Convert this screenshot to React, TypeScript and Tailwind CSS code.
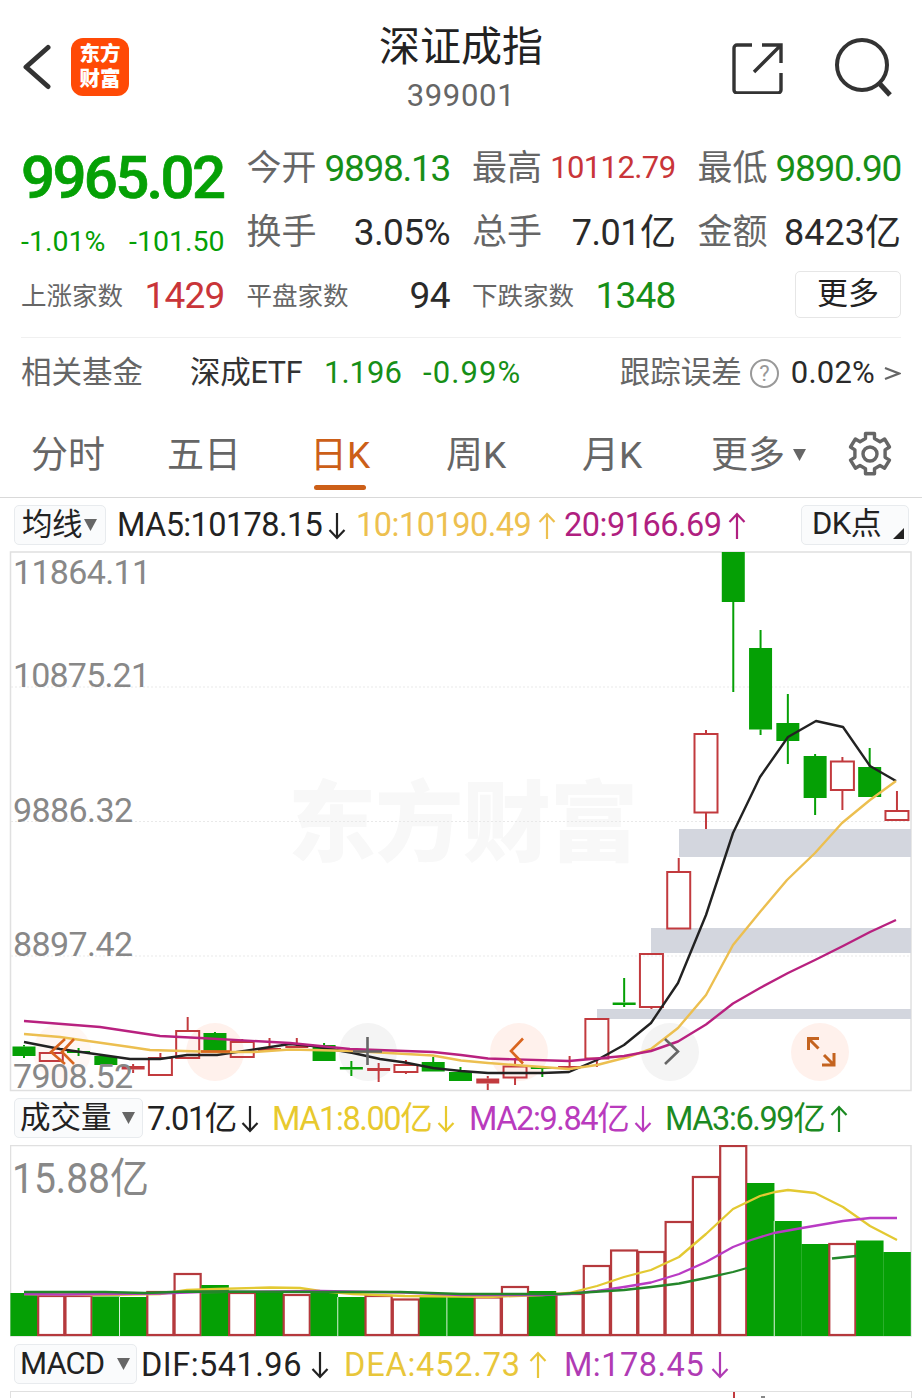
import React from 'react';

const STEP = 27.28;
const UP = '#c23a3e';
const DOWN = '#05a005';

type Candle = { up: boolean; open: number; close: number; high: number; low: number };

const c = (up: boolean, open: number, close: number, high: number, low: number): Candle => ({ up, open, close, high, low });

const candles: Candle[] = [
  c(false, 1046.5, 1056, 1045, 1058),
  c(true, 1053, 1061, 1051, 1061),
  c(false, 1051, 1053, 1048, 1056),
  c(false, 1056, 1065, 1056, 1065),
  c(true, 1066, 1069.5, 1064, 1073),
  c(true, 1058, 1075, 1053, 1075),
  c(true, 1031, 1058, 1017, 1058),
  c(false, 1033, 1052, 1032, 1052),
  c(true, 1042, 1057, 1039, 1057),
  c(true, 1048, 1051, 1038, 1051),
  c(true, 1046, 1048, 1038, 1048),
  c(false, 1045, 1061, 1043, 1061),
  c(false, 1067, 1069.5, 1061, 1076),
  c(true, 1068, 1071, 1063, 1082),
  c(true, 1065, 1072, 1060, 1074),
  c(false, 1062, 1071.5, 1057, 1071.5),
  c(false, 1072, 1081, 1067, 1081),
  c(true, 1078.5, 1083.5, 1076, 1090),
  c(true, 1066.5, 1077.5, 1058, 1085),
  c(false, 1067, 1069, 1067, 1077),
  c(true, 1066, 1068, 1056, 1068),
  c(true, 1019, 1058.5, 1019, 1067),
  c(false, 1002.5, 1005, 978, 1007),
  c(true, 954, 1007, 954, 1009),
  c(true, 872, 928.5, 858, 928.5),
  c(true, 734, 812.5, 730, 829),
  c(false, 552, 602, 552, 692),
  c(false, 648, 729.5, 630, 735),
  c(false, 723, 741, 694, 764),
  c(false, 756, 798, 754, 815),
  c(true, 761.5, 790, 757, 810),
  c(false, 767, 797, 748, 797),
  c(true, 811, 820, 791, 820),
];

// top edge of each volume bar; the colour comes from volumeUp
const volumes = [
  1293, 1296, 1296, 1296.5, 1297, 1292, 1274, 1285, 1293, 1291, 1295, 1291, 1297, 1296, 1299.5, 1297, 1297,
  1297.5, 1287, 1291, 1294, 1266, 1250.5, 1252, 1222, 1177, 1146, 1183, 1221, 1244, 1244, 1240.5, 1252,
];
const volumeUp = new Set([1, 2, 5, 6, 8, 10, 13, 14, 17, 18, 20, 21, 22, 23, 24, 25, 26, 30]);
const volumeGaps = [4, 12, 16, 28];

const ma5 = '24,1042 60,1049 130,1059 160,1059 187,1055 217,1055 290,1044 313,1046 353,1053 380,1059 405,1062.5 433,1068 461,1071 488,1073 542,1073 569,1072 597,1060 624,1045 651,1023 678,983 706,915 733,833 760,777 788,737 816,721 843,727 870,766 896,781';
const ma10 = '24,1034 60,1037 95,1042 130,1047 150,1050 217,1052 253,1052 290,1049.5 353,1051 433,1055.5 461,1060.5 488,1063 542,1067 569,1069 597,1065 628,1057 651,1049 678,1028 706,995 733,945 760,912 787,880 815,853 842,823 870,800 896,781';
const ma20 = '24,1021 100,1027 160,1036 200,1038 290,1043 350,1049 433,1052 461,1055 488,1058.5 569,1061 597,1058.5 624,1056 651,1051 678,1041.5 706,1024.5 733,1003.5 760,988 788,973 815,960 843,946 870,932 896,920';

const vma1 = '24,1294 100,1295 160,1294 187,1290 217,1289 270,1287.5 300,1288 320,1291 353,1294 405,1296 461,1296.5 488,1297 542,1295 569,1293 597,1286 624,1277 651,1270 679,1257 706,1234 733,1209 760,1196 775,1192 788,1190 815,1193 843,1207 870,1226 897,1240';
const vma2 = '24,1294 60,1294.5 160,1293.5 200,1292 320,1291 405,1292.5 461,1295 542,1295 569,1294 597,1291 624,1287 651,1282.5 679,1274 706,1262 733,1247 751,1240 774,1233 802,1228 843,1221 870,1218 897,1218';
const vma3 = '24,1292 105,1292 145,1293 187,1291.5 330,1292 400,1292 461,1294 560,1294 624,1290 651,1287 679,1283.5 706,1278 733,1272 747,1268';

const Arrow = ({ up = false }: { up?: boolean }) => (
  <svg width="18" height="28" viewBox="0 0 18 28" fill="none" stroke="currentColor" strokeWidth="2.2" className={up ? '' : 'rotate-180'}>
    <path d="M9 27V2M1.5 10 9 2l7.5 8" />
  </svg>
);

const Caret = ({ className = '' }: { className?: string }) => (
  <svg width="13" height="12" viewBox="0 0 13 12" className={className}>
    <path d="M0 0h13L6.5 12z" fill="#666" />
  </svg>
);

const Indicator = ({ text, up, className }: { text: string; up?: boolean; className: string }) => (
  <div className={`flex items-center justify-between shrink-0 pt-[2px] ${className}`}>
    <span>{text}</span>
    <Arrow up={up} />
  </div>
);

const Header = () => (
  <header className="flex h-[130px] px-[22px] justify-between shrink-0">
    <div className="flex items-center w-[180px] gap-[20px] pt-[4px]">
      <svg width="29" height="46" viewBox="0 0 29 46" fill="none" stroke="#333" strokeWidth="5" strokeLinecap="round">
        <path d="M26 3.5 4 23l22 19.5" strokeLinejoin="round" />
      </svg>
      <div className="w-[58px] h-[58px] rounded-[12px] bg-[#ff4a06] text-white font-black text-[20.5px] leading-[25px] flex flex-col items-center justify-center">
        <span>东方</span>
        <span>财富</span>
      </div>
    </div>
    <div className="flex flex-col items-center">
      <h1 className="text-[41px] leading-[50px] mt-[22px] text-[#222]">深证成指</h1>
      <div className="text-[31px] leading-[36px] mt-[6px] text-[#666] tracking-[0.7px]">399001</div>
    </div>
    <div className="w-[180px] flex justify-end items-center gap-[48px] pt-[3px] pr-[9px]">
      <svg width="54" height="54" viewBox="0 0 54 54" fill="none" stroke="#333" strokeWidth="3.4">
        <path d="M23 5H8a3 3 0 0 0-3 3v42a3 3 0 0 0 3 3h41a3 3 0 0 0 3-3V33M33 5h19v18M51 6 25 32" />
      </svg>
      <svg width="66" height="62" viewBox="0 0 66 62" fill="none" stroke="#333" strokeWidth="4" className="-mr-[6px]">
        <circle cx="31" cy="29" r="25" />
        <path d="m48 47 11 12" strokeWidth="5" />
      </svg>
    </div>
  </header>
);

const Cell = ({ label, value, className = '', small = false }: { label: string; value: string; className?: string; small?: boolean }) => (
  <div className="flex items-center justify-between whitespace-nowrap h-full">
    <span className={`text-[#666] ${small ? 'text-[25.5px]' : 'text-[35px] pt-[2px]'}`}>{label}</span>
    <span className={className}>{value}</span>
  </div>
);

const Quote = () => (
  <section className="grid grid-cols-4 gap-x-[22px] ml-[21px] mr-[21px] h-[200px] shrink-0 pt-[6px] grid-rows-[64px_64px_64px]">
    <div className="row-span-2 flex flex-col whitespace-nowrap text-[#05a005]">
      <div className="text-[60px] font-medium [-webkit-text-stroke:0.7px_#05a005] leading-[64px] mt-[10px] tracking-[-2.7px]">9965.02</div>
      <div className="flex justify-between text-[28.5px] leading-[32px] mt-[16px]">
        <span>-1.01%</span>
        <span>-101.50</span>
      </div>
    </div>
    <Cell label="今开" value="9898.13" className="pt-[2px] text-[37px] tracking-[-1.3px] text-[#178f17]" />
    <Cell label="最高" value="10112.79" className="pt-px text-[31px] tracking-[-0.6px] text-[#c93539]" />
    <Cell label="最低" value="9890.90" className="pt-[2px] text-[37px] tracking-[-1.3px] text-[#178f17]" />
    <Cell label="换手" value="3.05%" className="pt-px text-[37px] tracking-[-0.6px] text-[#2a2a2a]" />
    <Cell label="总手" value="7.01亿" className="pt-px text-[36px] tracking-[-0.5px] text-[#2a2a2a]" />
    <Cell label="金额" value="8423亿" className="pt-px text-[36px] text-[#2a2a2a]" />
    <Cell small label="上涨家数" value="1429" className="text-[37px] tracking-[-0.8px] text-[#c93539]" />
    <Cell small label="平盘家数" value="94" className="text-[37px] tracking-[-0.5px] text-[#2a2a2a]" />
    <Cell small label="下跌家数" value="1348" className="text-[37px] tracking-[-0.8px] text-[#178f17]" />
    <div className="flex items-center justify-end">
      <button className="w-[106px] h-[47px] border border-[#e6e6e6] rounded-[5px] text-[31px] leading-[44px] text-[#222] -mt-[4px]">更多</button>
    </div>
  </section>
);

const FundRow = () => (
  <section className="mx-[21px] mt-[7px] h-[71px] shrink-0 border-t border-[#f0f0f0] flex items-center text-[31px] whitespace-nowrap">
    <span className="text-[#666] w-[169px] text-[30.5px]">相关基金</span>
    <span className="text-[#333] w-[134px] text-[30.5px] tracking-[-0.3px]">深成ETF</span>
    <span className="text-[#178f17] w-[99px]">1.196</span>
    <span className="text-[#178f17] tracking-[1.1px]">-0.99%</span>
    <div className="ml-auto flex items-center">
      <span className="text-[#666] text-[30.5px]">跟踪误差</span>
      <span className="ml-[8px] w-[29px] h-[29px] rounded-full border-2 border-[#999] text-[#999] text-[22px] leading-[25px] text-center">?</span>
      <span className="ml-[12px] text-[#2a2a2a] tracking-[0.2px]">0.02%</span>
      <svg width="17" height="16" viewBox="0 0 17 16" fill="none" stroke="#666" strokeWidth="2.2" className="ml-[9px]">
        <path d="M1 3l14 5.500-14 5.500" />
      </svg>
    </div>
  </section>
);

const tabs = ['分时', '五日', '日K', '周K', '月K'];

const Tabs = () => (
  <nav className="h-[90px] shrink-0 border-b border-[#d9d9d9] flex text-[37px] text-[#666] overflow-hidden">
    {tabs.map((tab) => (
      <div key={tab} className={`w-[136px] shrink-0 flex flex-col items-center ${tab === '日K' ? 'text-[#cc5f18]' : ''}`}>
        <span className="leading-[54px] mt-[21px]">{tab}</span>
        {tab === '日K' && <span className="w-[52px] h-[5px] mt-[2px] rounded-full bg-[#cc5f18]" />}
      </div>
    ))}
    <div className="flex items-center ml-[31px] h-[54px] mt-[21px] shrink-0">
      <span className="leading-[54px]">更多</span>
      <Caret className="ml-[8px] -mt-[3px]" />
    </div>
    <svg width="46" height="46" viewBox="0 0 46 46" fill="none" stroke="#666" strokeWidth="3.4" className="ml-[41px] mt-[23px] shrink-0">
      <path d="M18.5 2.5h9v5l5.5 3.2 4.6-2.7 4.9 8-4.4 2.9v7.4l4.4 2.9-4.9 8-4.600-2.700-5.500 3.200v5h-9v-5l-5.500-3.200-4.600 2.700-4.900-8 4.400-2.900v-7.400l-4.400-2.900 4.900-8 4.600 2.700 5.500-3.200z" strokeLinejoin="round" />
      <circle cx="23" cy="23" r="7" />
    </svg>
  </nav>
);

const selectBox = 'flex items-center border border-[#e8ebee] bg-[#fafbfc] rounded-[5px] h-[40px] shrink-0 text-[#222]';

const MaRow = () => (
  <div className="h-[53px] shrink-0 pl-[14px] pr-[13px] flex items-center text-[32.5px] tracking-[-0.5px] whitespace-nowrap">
    <div className={`${selectBox} w-[92px] pl-[7px] text-[30.5px]`}>
      均线
      <Caret className="ml-[2px]" />
    </div>
    <Indicator text="MA5:10178.15" className="ml-[11px] w-[229px] text-[#222] tracking-[-0.6px]" />
    <Indicator text="10:10190.49" up className="ml-[10px] w-[200px] text-[#edc04f]" />
    <Indicator text="20:9166.69" up className="ml-[8px] w-[182px] text-[#b01f80]" />
    <div className={`${selectBox} w-[108px] pl-[10px] ml-auto text-[31px]`}>
      DK点
      <svg width="11" height="11" viewBox="0 0 11 11" className="ml-auto mr-[4px] mt-[18px]">
        <path d="M11 0v11H0z" fill="#222" />
      </svg>
    </div>
  </div>
);

const KLineChart = () => (
  <svg width="902" height="540" viewBox="10 551 902 540" className="ml-[10px] block shrink-0 overflow-visible">
    <rect x="10.5" y="552" width="900.5" height="538.5" fill="#fff" stroke="#e0e0e0" strokeWidth="1.5" />
    <text x="288" y="854" fontSize="88" fontWeight="900" fill="#f8f8f8" textLength="350">东方财富</text>
    {[687, 821.5, 956].map((y) => (
      <line key={y} x1="11" x2="910" y1={y} y2={y} stroke="#e9e9e9" strokeDasharray="2 2" />
    ))}
    <g fill="#d3d6de">
      <rect x="679" y="829" width="232" height="28" />
      <rect x="651" y="928" width="260" height="25" />
      <rect x="597" y="1009" width="314" height="10" />
    </g>
    {[62, 215, 368, 519, 670, 820].map((x, i) => (
      <circle key={x} cx={x} cy="1052" r="29" fill={i === 2 || i === 4 ? '#f4f4f4' : i === 0 ? '#fff7f4' : '#fff1ec'} />
    ))}
    {candles.map((k, i) => {
      const x = 24 + STEP * i;
      const flat = k.close - k.open < 5.5;
      const color = k.up ? UP : DOWN;
      return (
        <g key={i} stroke={color} strokeWidth="2">
          <line x1={x} x2={x} y1={k.high} y2={k.open} />
          <line x1={x} x2={x} y1={k.close} y2={k.low} />
          {k.up && !flat ? (
            <rect x={x - 11.5} y={k.open} width="23" height={k.close - k.open} fill="none" />
          ) : (
            <rect x={x - 11.5} y={k.open} width="23" height={k.close - k.open} fill={color} stroke="none" />
          )}
        </g>
      );
    })}
    <g fill="#888" fontSize="34">
      <text x="13" y="584" textLength="138">11864.11</text>
      <text x="13" y="687" textLength="137">10875.21</text>
      <text x="13" y="822" textLength="120">9886.32</text>
      <text x="13" y="956" textLength="120">8897.42</text>
      <text x="13" y="1088" textLength="120">7908.52</text>
    </g>
    <g fill="none" strokeWidth="2.4" strokeLinejoin="round">
      <polyline points={ma5} stroke="#222" />
      <polyline points={ma10} stroke="#ecbf50" />
      <polyline points={ma20} stroke="#b8217f" />
    </g>
    <g fill="none" stroke="#d9651f" strokeWidth="2.6">
      <path d="M65 1039 51 1052l14 12M74 1039l-12 13 12 12" />
      <path d="M201 1051.5h29" />
      <path d="M523 1038.5 511 1051l12 12.5" />
      <path d="M808.5 1050v-11.5H819M809 1039l9.5 9.5M834 1053v12h-12M833.5 1064.5l-9.5-9.5" stroke="#c4631f" strokeWidth="3" />
    </g>
    <g fill="none" stroke="#666" strokeWidth="2.6">
      <path d="M353 1051.5h29M367.5 1037v28" />
      <path d="M665 1039l13 12.5-13 12.5" />
    </g>
  </svg>
);

const VolumeRow = () => (
  <div className="h-[54px] shrink-0 pl-[14px] flex items-center text-[32.5px] tracking-[-1.4px] whitespace-nowrap">
    <div className={`${selectBox} w-[129px] pl-[5px] text-[30.5px] tracking-normal`}>
      成交量
      <Caret className="ml-[10px]" />
    </div>
    <Indicator text="7.01亿" className="ml-[4px] w-[112px] text-[#222]" />
    <Indicator text="MA1:8.00亿" className="ml-[13px] w-[183px] text-[#e8c92e]" />
    <Indicator text="MA2:9.84亿" className="ml-[14px] w-[183px] text-[#b93bbd]" />
    <Indicator text="MA3:6.99亿" up className="ml-[13px] w-[183px] text-[#1c8a22]" />
  </div>
);

const VolumeChart = () => (
  <svg width="902" height="192" viewBox="10 1145 902 192" className="ml-[10px] block shrink-0">
    <rect x="10.5" y="1145.5" width="900.5" height="190.5" fill="#fff" stroke="#e0e0e0" strokeWidth="1.5" />
    <text x="12" y="1192.5" fontSize="42" fill="#888" textLength="137" lengthAdjust="spacingAndGlyphs">15.88亿</text>
    {volumes.map((y, i) => {
      const x = 10.4 + STEP * i;
      return volumeUp.has(i) ? (
        <rect key={i} x={x + 0.5} y={y} width={STEP - 1.2} height={1335 - y} fill="#fff" stroke="#b5393d" strokeWidth="2.2" />
      ) : (
        <rect key={i} x={x} y={y} width={STEP + 0.2} height={1336 - y} fill={DOWN} />
      );
    })}
    {volumeGaps.map((i) => (
      <line key={i} x1={10.4 + STEP * i} x2={10.4 + STEP * i} y1={volumes[i]} y2="1336" stroke="#d8f0d8" />
    ))}
    <g fill="none" strokeWidth="2.3" strokeLinejoin="round">
      <polyline points={vma1} stroke="#e3c932" />
      <polyline points={vma2} stroke="#b93bc4" />
      <polyline points={vma3} stroke="#24862a" />
      <path d="M832 1258.5l24-2.5" stroke="#24862a" />
    </g>
  </svg>
);

const MacdRow = () => (
  <div className="h-[54px] shrink-0 pl-[14px] flex items-center text-[32.5px] tracking-[0.5px] whitespace-nowrap">
    <div className={`${selectBox} w-[123px] pl-[5px] text-[31px] tracking-[-0.9px]`}>
      MACD
      <Caret className="ml-[13px]" />
    </div>
    <Indicator text="DIF:541.96" className="ml-[4px] w-[188px] text-[#222]" />
    <Indicator text="DEA:452.73" up className="ml-[15px] w-[203px] text-[#e8c63a] tracking-[0.8px]" />
    <Indicator text="M:178.45" className="ml-[17px] w-[165px] text-[#b03bb4]" />
  </div>
);

export default function App() {
  return (
    <main className="w-[922px] h-[1398px] bg-white overflow-hidden flex flex-col font-[Roboto,'Noto_Sans_CJK_SC',sans-serif]">
      <Header />
      <Quote />
      <FundRow />
      <Tabs />
      <MaRow />
      <KLineChart />
      <VolumeRow />
      <VolumeChart />
      <MacdRow />
      <div className="mx-[10px] h-[7px] border-t border-x border-[#e0e0e0] flex items-start shrink-0">
        <span className="ml-[722px] w-[2px] h-[6px] bg-[#c23a3e]" />
        <span className="ml-[26px] mt-[4px] w-[4px] h-[2px] bg-[#888]" />
      </div>
    </main>
  );
}
